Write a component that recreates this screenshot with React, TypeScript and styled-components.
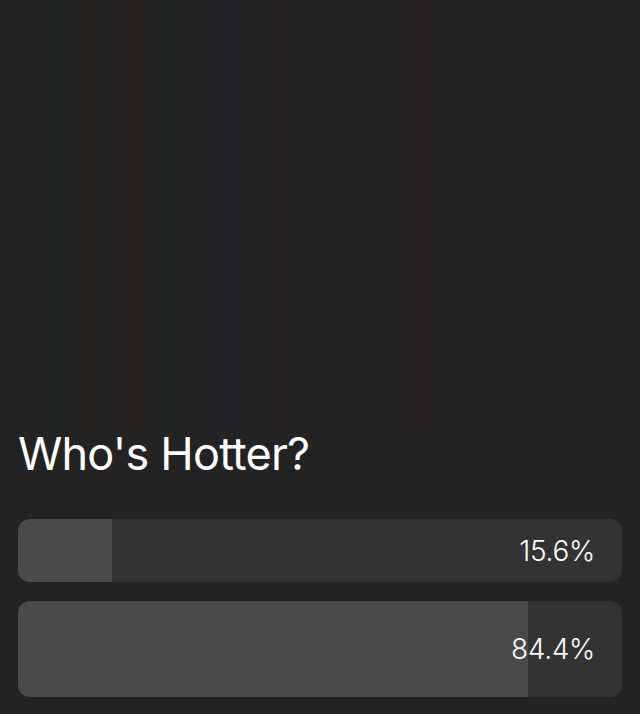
import React from "react";
import styled, { createGlobalStyle } from "styled-components";

const Global = createGlobalStyle`
  html, body { margin: 0; padding: 0; background: #232323; }
  body { font-family: Inter, "Liberation Sans", sans-serif; color: #fff; }
`;

const Page = styled.div`
  width: 640px;
  min-height: 714px;
  background: #232323;
  display: flex;
  flex-direction: column;
`;

const Cover = styled.div`
  height: 432px;
  background: linear-gradient(
    90deg,
    #242424 0px,
    #232323 35px,
    #222423 45px,
    #232323 70px,
    #252322 85px,
    #242424 100px,
    #242328 110px,
    #252221 125px,
    #252322 150px,
    #222423 155px,
    #232323 190px,
    #242328 210px,
    #242424 260px,
    #252224 290px,
    #242424 305px,
    #242424 380px,
    #252223 410px,
    #242424 450px,
    #242424 640px
  );
`;

const Content = styled.div`
  padding: 0 18px;
  display: flex;
  flex-direction: column;
`;

const Title = styled.h1`
  margin: 0;
  font-size: 45px;
  font-weight: 400;
  line-height: 44px;
  letter-spacing: -0.8px;
  color: #ffffff;
`;

const Options = styled.div`
  margin-top: 43px;
  display: flex;
  flex-direction: column;
  gap: 19px;
`;

const Bar = styled.div<{ $h: number }>`
  position: relative;
  height: ${(p) => p.$h}px;
  border-radius: 12px;
  background: #333333;
  overflow: hidden;
  display: flex;
  align-items: center;
  justify-content: flex-end;
  padding: 0 27px;
`;

const Fill = styled.div`
  position: absolute;
  left: 0;
  top: 0;
  bottom: 0;
  background: #4a4a4a;
`;

const Label = styled.span`
  position: relative;
  font-size: 28px;
  font-weight: 300;
  letter-spacing: -0.3px;
  color: #ffffff;
`;

const options = [
  { pct: 15.6, h: 63 },
  { pct: 84.4, h: 96 },
];

export default function App() {
  return (
    <>
      <Global />
      <Page>
        <Cover />
        <Content>
          <Title>Who's Hotter?</Title>
          <Options>
            {options.map((o) => (
              <Bar key={o.pct} $h={o.h}>
                <Fill style={{ width: `${o.pct}%` }} />
                <Label>{o.pct.toFixed(1)}%</Label>
              </Bar>
            ))}
          </Options>
        </Content>
      </Page>
    </>
  );
}
